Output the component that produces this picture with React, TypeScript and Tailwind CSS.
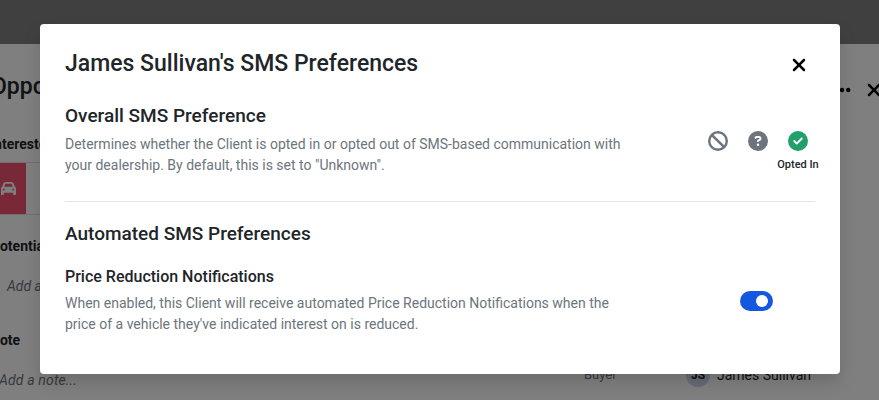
import React from "react";
import { FaBan, FaCar, FaCircleCheck, FaCircleQuestion, FaEllipsis, FaXmark } from "react-icons/fa6";

function OpportunityPage() {
  return (
    <div className="h-[400px] w-[879px] overflow-hidden bg-white text-[#212529]">
      <div className="h-11 bg-[#808080]" />
      <div className="flex h-[356px] justify-between">
        <div className="-ml-[9px] w-[300px] whitespace-nowrap">
          <h1 className="mt-[25px] text-[23px] font-medium leading-9">Opportunity</h1>
          <h2 className="-ml-px mt-[29px] text-[14px] font-bold leading-5">Interested In</h2>
          <div className="mt-2 flex h-[53px] border-y border-[#dee2e6]">
            <div className="flex w-[35px] items-center justify-end bg-[#f0506e] pr-[10px] text-white">
              <FaCar size={15} />
            </div>
          </div>
          <h2 className="mt-[21px] text-[14px] font-bold leading-5">Potential Trade</h2>
          <p className="mt-5 pl-4 text-[14px] italic leading-5 text-[#6c757d]">Add a trade...</p>
          <h2 className="-ml-px mt-[34px] text-[14px] font-bold leading-5">Note</h2>
          <p className="mt-5 pl-2 text-[14px] italic leading-5 tracking-[0.15px] text-[#6c757d]">Add a note...</p>
        </div>
        <div className="flex w-[295px] flex-col justify-between">
          <div className="-mr-[4.5px] mt-[36px] flex items-center justify-end gap-3 text-black">
            <FaEllipsis size={20} />
            <FaXmark size={20} />
          </div>
          <div className="mb-[13px] flex h-6 items-center text-[14px]">
            <span className="w-[102px] text-[13px] text-[#6c757d]">Buyer</span>
            <span className="flex size-6 items-center justify-center rounded-full bg-[#ccd6eb] text-[12px] font-bold">JS</span>
            <span className="ml-[7px]">James Sullivan</span>
          </div>
        </div>
      </div>
    </div>
  );
}

function Modal() {
  return (
    <section className="h-[350px] w-[800px] rounded-[4px] bg-white px-[25px] text-[#212529] shadow-[0_8px_16px_rgba(0,0,0,0.15)]">
      <header className="flex h-[78px] items-center justify-between pr-[6.5px]">
        <h1 className="mt-px text-[23px] font-medium leading-9">James Sullivan's SMS Preferences</h1>
        <FaXmark size={20} className="mt-1 text-black" />
      </header>
      <div className="flex h-[100px] justify-between border-b border-[#e5e5e5]">
        <div>
          <h2 className="text-[19px] font-medium leading-[27px]">Overall SMS Preference</h2>
          <p className="mt-[5px] w-[570px] text-[14px] leading-[21px] text-[#6c757d]">
            Determines whether the Client is opted in or opted out of SMS-based communication with your dealership. By default, this is set to "Unknown".
          </p>
        </div>
        <div className="-mr-[3px] flex pt-[29.4px] text-[#6c757d]">
          <div className="w-10"><FaBan size={20} /></div>
          <div className="w-[30px]"><FaCircleQuestion size={20} /></div>
          <div className="flex w-[40px] flex-col items-center">
            <FaCircleCheck size={20} className="text-[#22a06b]" />
            <span className="mt-[5.6px] whitespace-nowrap text-[11px] font-medium leading-4 text-[#212529]">Opted In</span>
          </div>
        </div>
      </div>
      <h2 className="mt-[18px] text-[19px] font-medium leading-[27px]">Automated SMS Preferences</h2>
      <div className="mt-[18px] flex items-start justify-between">
        <div>
          <h3 className="text-[16px] font-medium leading-6">Price Reduction Notifications</h3>
          <p className="mt-1 w-[560px] text-[14px] leading-[21px] text-[#6c757d]">
            When enabled, this Client will receive automated Price Reduction Notifications when the price of a vehicle they've indicated interest on is reduced.
          </p>
        </div>
        <div className="mr-[42px] mt-[26px] flex h-5 w-[33px] items-center justify-end rounded-full bg-[#1558e0] pr-[5px]">
          <span className="size-3 rounded-full bg-white" />
        </div>
      </div>
    </section>
  );
}

export default function App() {
  return (
    <div className="relative h-[400px] w-[879px] overflow-hidden font-['Roboto',sans-serif]">
      <OpportunityPage />
      <div className="absolute inset-0 bg-black/50 pl-10 pt-6">
        <Modal />
      </div>
    </div>
  );
}
